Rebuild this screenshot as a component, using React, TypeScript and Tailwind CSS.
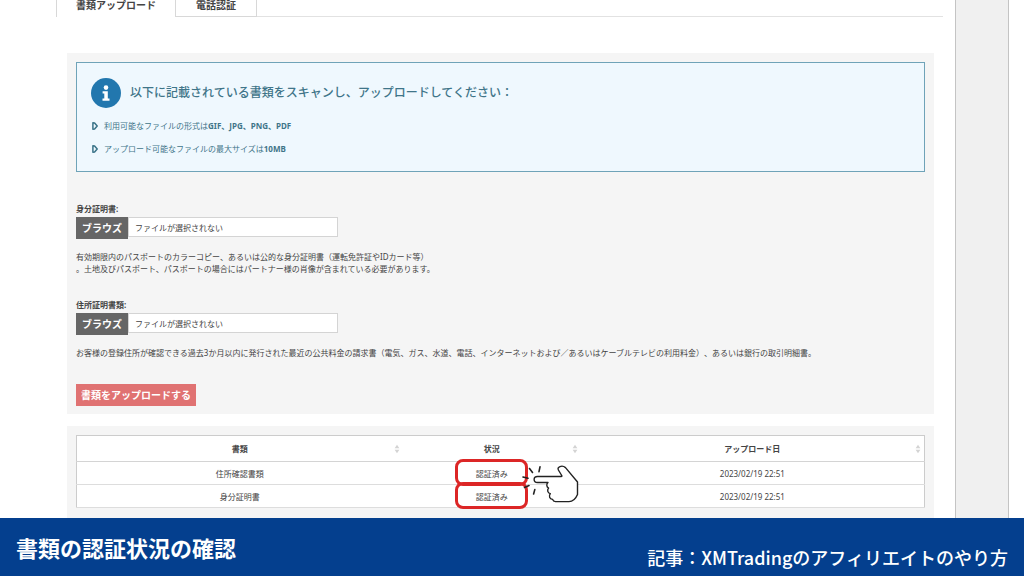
import React, { useRef, useState } from "react";

type UploadFieldProps = {
  id: string;
  label: string;
  children: React.ReactNode;
};

type DocumentRow = {
  name: string;
  status: string;
  uploadedAt: string;
};

const documents: DocumentRow[] = [
  { name: "住所確認書類", status: "認証済み", uploadedAt: "2023/02/19 22:51" },
  { name: "身分証明書", status: "認証済み", uploadedAt: "2023/02/19 22:51" },
];

const columns = [
  { title: "書類", width: "w-5/13" },
  { title: "状況", width: "w-[21%]" },
  { title: "アップロード日", width: "w-auto" },
];

const InfoIcon: React.FC = () => (
  <svg viewBox="0 0 30 30" className="size-[30px] shrink-0" aria-hidden="true">
    <circle cx="15" cy="15" r="15" fill="#2277ae" />
    <circle cx="15" cy="9.6" r="2.3" fill="#fff" />
    <path d="M11.6 13.2h5.2v7.2h1.7v2.4h-7v-2.4h1.8v-4.8h-1.7z" fill="#fff" />
  </svg>
);

const BulletIcon: React.FC = () => (
  <svg viewBox="0 0 6 8" className="h-2 w-1.5 shrink-0" aria-hidden="true">
    <path d="M0.9 0.8 L2.6 1 L5.2 4 L2.6 7 L0.9 7.2 Z" fill="none" stroke="#3a7388" strokeWidth="1.5" strokeLinejoin="round" />
  </svg>
);

const SortIcon: React.FC = () => (
  <svg viewBox="0 0 6 10" className="h-2.5 w-1.5" aria-hidden="true">
    <path d="M3 0.8 L5.4 4.3 H0.6 Z M3 9.2 L0.6 5.7 H5.4 Z" fill="#d4d4d4" />
  </svg>
);

const PointingHand: React.FC = () => (
  <svg
    viewBox="0 0 56 42"
    className="pointer-events-none absolute -top-1.5 left-full z-10 h-[42px] w-14 overflow-visible"
    fill="none"
    stroke="#222"
    strokeLinecap="round"
    strokeLinejoin="round"
    aria-hidden="true"
  >
    <g strokeWidth="1.6">
      <path d="M1.5 6.5 L4.5 10.5" />
      <path d="M12 4.8 L11 9.6" />
      <path d="M-5 15 L0 16.2" />
      <path d="M1 23.5 L-3.5 25.5" />
      <path d="M6.8 27.6 L5.6 32" />
    </g>
    <path
      d="M33 14.5 H9.5 C5 14.5 5 20.5 9.5 20.5 H20 C18.3 22 18.3 24.8 20.6 26 C18.9 28 19.6 31 22.3 31.6 C20.5 34 21.5 36.8 24.6 37.4 Q25.2 39.4 27.5 39.6 H41 Q46.5 39.6 49.5 32.5 V20 L37.5 5.6 C34 2.6 28.6 5 30.4 8 L34 14 Z"
      fill="#fff"
      strokeWidth="1.4"
    />
  </svg>
);

const UploadField: React.FC<UploadFieldProps> = ({ id, label, children }) => {
  const fileRef = useRef<HTMLInputElement>(null);
  const [fileName, setFileName] = useState("ファイルが選択されない");

  return (
    <div>
      <label htmlFor={id} className="block font-bold leading-3">
        {label}
      </label>
      <div className="mt-0.5 flex items-start">
        <button
          type="button"
          onClick={() => fileRef.current?.click()}
          className="h-[22px] w-[52px] shrink-0 bg-[#666] text-[10px] font-bold text-white"
        >
          ブラウズ
        </button>
        <input
          id={id}
          type="text"
          readOnly
          value={fileName}
          className="h-5 w-[210px] border border-[#d4d4d4] bg-white px-1.5"
        />
        <input
          ref={fileRef}
          type="file"
          accept=".gif,.jpg,.png,.pdf"
          aria-label={label}
          className="hidden"
          onChange={(e) => setFileName(e.target.files?.[0]?.name ?? fileName)}
        />
      </div>
      <p className="mt-3 leading-3">{children}</p>
    </div>
  );
};

const App: React.FC = () => {
  return (
    <div className="flex min-h-screen flex-col bg-white font-['Noto_Sans','Noto_Sans_CJK_JP',sans-serif] text-[8px] text-[#444] [text-spacing-trim:space-all]">
      <div className="flex grow">
        <main className="min-w-0 grow pr-3 pl-14">
          {/* Tabs */}
          <nav className="flex text-[10px] leading-[11px] font-bold">
            <button type="button" className="w-[119px] border-l border-[#d8d8d8] pb-1.5 font-bold">
              書類アップロード
            </button>
            <button type="button" className="w-[82px] border-x border-b border-[#d8d8d8] pb-[5px] font-bold">
              電話認証
            </button>
            <div className="grow border-b border-[#e2e2e2]" />
          </nav>

          {/* Upload form */}
          <form className="mt-9 mr-[9px] ml-[11px] bg-[#f5f5f5] px-[9px] pt-[9px] pb-2" onSubmit={(e) => e.preventDefault()}>
            <section className="border border-[#6fa3b8] bg-[#eff8fe] px-3.5 pt-[15px] pb-4 text-[#3f7589]">
              <div className="flex items-center gap-[9px]">
                <InfoIcon />
                <h2 className="text-[12px] font-medium">
                  以下に記載されている書類をスキャンし、アップロードしてください：
                </h2>
              </div>
              <ul className="mt-3 flex flex-col gap-[11px] pl-px leading-3">
                <li className="flex items-center gap-1.5">
                  <BulletIcon />
                  <span>
                    利用可能なファイルの形式は<b>GIF、JPG、PNG、PDF</b>
                  </span>
                </li>
                <li className="flex items-center gap-1.5">
                  <BulletIcon />
                  <span>
                    アップロード可能なファイルの最大サイズは<b>10MB</b>
                  </span>
                </li>
              </ul>
            </section>

            <div className="mt-[31px] flex flex-col gap-6">
              <UploadField id="identity" label="身分証明書:">
                有効期限内のパスポートのカラーコピー、あるいは公的な身分証明書（運転免許証やIDカード等）
                <br />
                。土地及びパスポート、パスポートの場合にはパートナー様の肖像が含まれている必要があります。
              </UploadField>
              <UploadField id="residency" label="住所証明書類:">
                お客様の登録住所が確認できる過去3か月以内に発行された最近の公共料金の請求書（電気、ガス、水道、電話、インターネットおよび／あるいはケーブルテレビの利用料金）、あるいは銀行の取引明細書。
              </UploadField>
            </div>

            <button type="submit" className="mt-[25px] h-[22px] w-[120px] bg-[#e07272] text-[10px] font-bold text-white">
              書類をアップロードする
            </button>
          </form>

          {/* Uploaded documents */}
          <section className="mt-3 mr-[9px] ml-[11px] bg-[#f5f5f5] px-[9px] pt-[9px] pb-2.5">
            <table className="w-full table-fixed border-collapse border border-[#ccc] bg-white text-center leading-3">
              <thead>
                <tr className="h-[26px] border-b border-[#d4d4d4]">
                  {columns.map((column) => (
                    <th key={column.title} className={`${column.width} p-0`}>
                      <div className="relative">
                        {column.title}
                        <span className="absolute top-px right-[3px]">
                          <SortIcon />
                        </span>
                      </div>
                    </th>
                  ))}
                </tr>
              </thead>
              <tbody>
                {documents.map((doc, index) => (
                  <tr key={doc.name} className="h-[23px] border-b border-[#ddd]">
                    <td className="p-0 pt-0.5">{doc.name}</td>
                    <td className="p-0 pt-0.5">
                      <div className="relative mx-auto w-[73px]">
                        {doc.status}
                        <span className="absolute -top-[9px] -bottom-[6px] inset-x-0 rounded-lg border-[3px] border-[#dc2626]" />
                        {index === 0 && <PointingHand />}
                      </div>
                    </td>
                    <td className="p-0 pt-0.5">{doc.uploadedAt}</td>
                  </tr>
                ))}
              </tbody>
            </table>
          </section>
        </main>
        <aside className="w-[54px] shrink-0 border-x border-[#c4c4c4] bg-[#f0f0f0]" />
        <div className="w-[15px] shrink-0" />
      </div>

      {/* Caption */}
      <footer className="flex h-[58px] shrink-0 items-center justify-between bg-[#043f8e] px-4 font-['Noto_Sans_CJK_JP',sans-serif] font-bold text-white">
        <h1 className="text-[22px]">書類の認証状況の確認</h1>
        <p className="pt-5 text-[18px] font-medium">記事：XMTradingのアフィリエイトのやり方</p>
      </footer>
    </div>
  );
};

export default App;
